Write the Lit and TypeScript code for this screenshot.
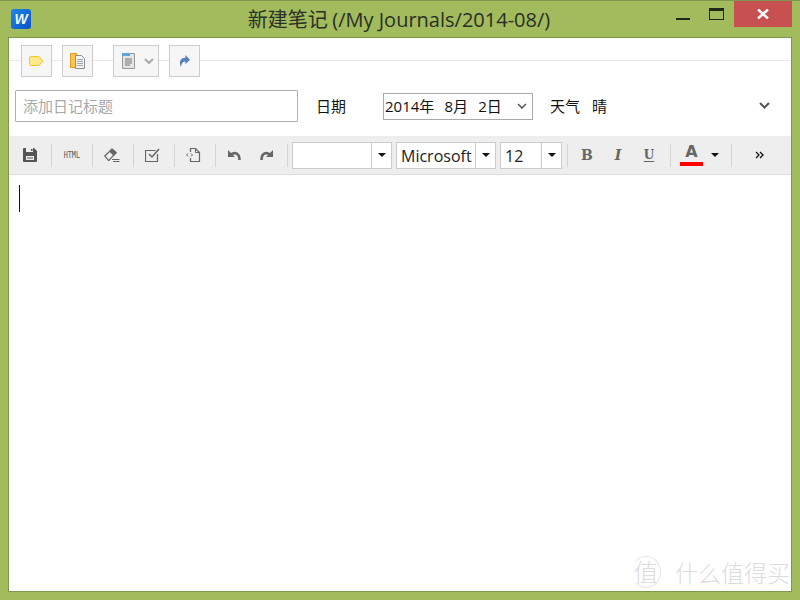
import { LitElement, html, css, svg } from "lit";
import { customElement } from "lit/decorators.js";

@customElement("app-root")
export class AppRoot extends LitElement {
  static styles = css`
    :host { display: block; width: 800px; height: 600px; overflow: hidden; font-family: "Open Sans","Noto Sans CJK SC",sans-serif; }
    svg { display: block; }
    .win { position: relative; width: 800px; height: 600px; box-sizing: border-box; background: #a1bb5d; border-top: 1px solid #7e9650; padding: 0 8px 8px; display: flex; flex-direction: column; }
    .title { height: 36px; flex: none; display: grid; grid-template-columns: 1fr auto 1fr; align-items: start; }
    .logo { margin: 8px 0 0 3px; width: 20px; height: 20px; border-radius: 3px; background: linear-gradient(135deg, #1f86e6, #0a52c8); color: #f2f6ff; font: italic bold 14px/20px "Liberation Sans", sans-serif; text-align: center; }
    .ttl { text-align: center; font-size: 20px; line-height: 26px; padding: 5px 2px 0 0; color: #2b2f25; font-family: "Noto Sans CJK SC", sans-serif; white-space: nowrap; }
    .ttl span { font-family: "Open Sans", sans-serif; }
    .wc { display: flex; align-items: flex-start; justify-content: flex-end; }
    .min { width: 14px; height: 2px; background: #22261b; margin: 17px 19px 0 0; }
    .max { width: 15px; height: 12px; box-sizing: border-box; border: 1px solid #22261b; border-top-width: 3px; margin: 7px 10px 0 0; }
    .close { width: 58px; height: 26px; background: #c75050; display: flex; align-items: center; justify-content: center; }
    .client { flex: 1; background: #fff; display: flex; flex-direction: column; min-height: 0; border: 1px solid #7e9650; }
    .tools { height: 31px; margin-top: 7px; padding-left: 12px; display: flex; gap: 10px; background: linear-gradient(#eaeaea, #eaeaea) 0 15px / 100% 1px no-repeat; }
    .tb { width: 31px; height: 32px; box-sizing: border-box; border: 1px solid #ccc; background: #f6f6f6; display: flex; align-items: center; justify-content: center; gap: 8px; }
    .tb.wide { width: 46px; margin: 0 0 0 10px; padding-left: 4px; }
    .meta { display: flex; align-items: center; height: 32px; margin-top: 14px; padding-left: 6px; font-size: 15px; color: #111; }
    .in { width: 283px; height: 32px; box-sizing: border-box; border: 1px solid #b0b0b0; border-radius: 1px; color: #a8a8a8; padding-left: 7px; line-height: 30px; flex: none; }
    .lb { margin-left: 18px; width: 67px; flex: none; padding-bottom: 2px; }
    .date { width: 150px; height: 27px; box-sizing: border-box; border: 1px solid #aaa; display: flex; align-items: center; justify-content: space-between; padding: 0 5px 0 1px; white-space: pre; word-spacing: 1.2px; flex: none; }
    .date span { padding-bottom: 2px; }
    .wl { margin-left: 17px; width: 42px; flex: none; padding-bottom: 2px; }
    .wv { flex: 1; padding-bottom: 2px; }
    .mchev { margin: 0 21px 2px 0; }
    .fmt { height: 38px; margin-top: 14px; flex: none; background: #eee; border-bottom: 1px solid #ddd; display: flex; align-items: center; }
    .ic { width: 40px; height: 38px; display: flex; align-items: center; justify-content: center; flex: none; box-sizing: border-box; }
    .ic.first { width: 42px; }
    .ic.left { padding-right: 3px; }
    .undo { width: 37px; }
    .redo { width: 26px; }
    .b1 { width: 38px; }
    .i1 { width: 24px; }
    .sep { width: 1px; height: 23px; background: #d4d4d4; flex: none; }
    .html { font: 400 9px/1 "DejaVu Sans Mono", monospace; color: #555; transform: scaleX(.75); }
    .combo { height: 27px; box-sizing: border-box; border: 1px solid #ccc; background: #fff; display: flex; flex: none; font-size: 16px; color: #222; line-height: 27px; }
    .combo .v { flex: 1; padding-left: 4px; overflow: hidden; white-space: nowrap; }
    .combo .b { width: 19px; border-left: 1px solid #ccc; display: flex; align-items: center; justify-content: center; flex: none; }
    .c100 { width: 100px; }
    .c62 { width: 62px; }
    .tri { width: 0; height: 0; border: 4px solid transparent; border-top: 4px solid #111; border-bottom: 0; flex: none; }
    .glyph { font: bold 14px/1 "DejaVu Serif", serif; color: #666; }
    .glyph.i { font-style: italic; }
    .glyph.u { font-size: 12px; text-decoration: underline; text-underline-offset: 2px; }
    .colorA { width: 23px; height: 26px; display: flex; flex-direction: column; align-items: center; font: bold 16px/19px "DejaVu Sans", sans-serif; color: #666; flex: none; }
    .colorA i { display: block; width: 23px; height: 4px; background: #f00; margin-top: 1px; }
    .s2 { width: 2px; flex: none; } .s4 { width: 4px; flex: none; } .s5 { width: 5px; flex: none; } .s8 { width: 8px; flex: none; } .s9 { width: 9px; flex: none; } .s12 { width: 12px; flex: none; } .s23 { width: 23px; flex: none; }
    .body { flex: 1; position: relative; padding: 10px 0 0 10px; }
    .caret { width: 1px; height: 27px; background: #111; }
    .wm { position: absolute; right: 1px; bottom: 3px; display: flex; align-items: center; gap: 14px; color: #dcdcdc; font: 300 23px/30px "Noto Sans CJK SC", sans-serif; white-space: nowrap; }
    .wm b { width: 30px; height: 32px; box-sizing: border-box; border: 1px solid #e6e6e6; border-left-color: transparent; border-radius: 50%; font-weight: 300; font-size: 25px; line-height: 29px; text-align: center; }
  `;

  private stroke(d: string, w = 1.5, c = "#666") {
    return svg`<path d=${d} fill="none" stroke=${c} stroke-width=${w}/>`;
  }

  render() {
    return html`<div class="win">
      <div class="title">
        <div class="logo">W</div>
        <div class="ttl">新建笔记 <span>(/My Journals/2014-08/)</span></div>
        <div class="wc">
          <div class="min"></div><div class="max"></div>
          <div class="close"><svg width="12" height="10" viewBox="0 0 12 10"><path d="M1 0.5 11 9.5M11 .5 1 9.5" stroke="#fff" stroke-width="2.4"/></svg></div>
        </div>
      </div>
      <div class="client">
        <div class="tools">
          <div class="tb"><svg width="15" height="10" viewBox="0 0 15 10"><path d="M1.5.5h8.5l4 4.5-4 4.5H1.5a1 1 0 0 1-1-1v-7a1 1 0 0 1 1-1z" fill="#ffe98a" stroke="#f4c430"/></svg></div>
          <div class="tb"><svg width="15" height="16" viewBox="0 0 15 16"><path d="M.5.5h6v14h-6z" fill="#fbc64a" stroke="#dc9a1e"/><path d="M5.500 2.500h6l3 3v10h-9z" fill="#f4f4f4" stroke="#8b8f94"/><path d="M7 6.500h6M7 8.500h6M7 10.500h6M7 12.500h6" stroke="#9aa7b0"/></svg></div>
          <div class="tb wide"><svg width="14" height="16" viewBox="0 0 14 16"><path d="M.5.5h12v15H.5z" fill="#e4e4e4" stroke="#999"/><path d="M0 0h8v3H0z" fill="#5ba6dd"/><path d="M3 6h7M3 8h7M3 10h7M3 12h5" stroke="#777"/></svg><svg width="10" height="6" viewBox="0 0 10 6"><path d="M1 1l4 4 4-4" fill="none" stroke="#aaa" stroke-width="2"/></svg></div>
          <div class="tb"><svg width="11" height="12" viewBox="0 0 12 13"><path d="M7 0l5 5-5 5V7C4 7 3 9 2 13 0 8 1 3 7 3z" fill="#5a82b8"/></svg></div>
        </div>
        <div class="meta">
          <div class="in">添加日记标题</div>
          <div class="lb">日期</div>
          <div class="date"><span>2014年  8月  2日</span><svg width="10" height="6" viewBox="0 0 10 6"><path d="M1 1l4 4 4-4" fill="none" stroke="#555" stroke-width="1.500"/></svg></div>
          <div class="wl">天气</div>
          <div class="wv">晴</div>
          <svg class="mchev" width="11" height="7" viewBox="0 0 11 7"><path d="M1 1l4.500 4.500L10 1" fill="none" stroke="#555" stroke-width="2"/></svg>
        </div>
        <div class="fmt">
          <div class="ic first"><svg width="14" height="14" viewBox="0 0 14 14"><path d="M0 1a1 1 0 0 1 1-1h10l3 3v10a1 1 0 0 1-1 1H1a1 1 0 0 1-1-1z" fill="#555"/><path d="M3 0h7v4H3zM3 8h8v4H3z" fill="#eee"/><path d="M8 1h1.500v2H8z" fill="#555"/><path d="M4 10h6" stroke="#555"/></svg></div>
          <div class="sep"></div>
          <div class="ic"><span class="html">HTML</span></div>
          <div class="sep"></div>
          <div class="ic left"><svg width="16" height="14" viewBox="0 0 16 14">${this.stroke("M.8 8 8 1l4 3.500-7 8H4.500z", 1.200)}<path d="M8 .5l5 4-3 3.500-5-4.500z" fill="#666"/>${this.stroke("M8 11.500h7.500M9 13.500h6.500", 1)}</svg></div>
          <div class="sep"></div>
          <div class="ic left"><svg width="15" height="14" viewBox="0 0 15 14">${this.stroke("M12.500 6v7.500H.5v-11h10", 1.200)}${this.stroke("M4 6l3 3 7-8", 1.500)}</svg></div>
          <div class="sep"></div>
          <div class="ic left"><svg width="15" height="14" viewBox="0 0 15 14">${this.stroke("M4.500 4V.5h5l4 4v9h-9V10", 1.200)}${this.stroke("M2 5.500 0.500 7 2 8.500M5 5.500 6.500 7 5 8.500", 1)}${this.stroke("M9.500.5v4h4", 1)}</svg></div>
          <div class="sep"></div>
          <div class="ic undo"><svg width="13" height="11" viewBox="0 0 13 11"><path d="M0 0v7h7z" fill="#666"/>${this.stroke("M3 4.500C7 1.500 11.500 3.500 11.500 10", 2.600)}</svg></div>
          <div class="ic redo"><svg width="13" height="11" viewBox="0 0 13 11"><path d="M13 0v7H6z" fill="#666"/>${this.stroke("M10 4.500C6 1.500 1.500 3.500 1.500 10", 2.600)}</svg></div>
          <div class="s8"></div>
          <div class="sep"></div>
          <div class="s4"></div>
          <div class="combo c100"><div class="v"></div><div class="b"><div class="tri"></div></div></div>
          <div class="s4"></div>
          <div class="combo c100"><div class="v">Microsoft</div><div class="b"><div class="tri"></div></div></div>
          <div class="s4"></div>
          <div class="combo c62"><div class="v">12</div><div class="b"><div class="tri"></div></div></div>
          <div class="s5"></div>
          <div class="sep"></div>
          <div class="ic b1"><span class="glyph">B</span></div>
          <div class="ic i1"><span class="glyph i">I</span></div>
          <div class="ic b1"><span class="glyph u">U</span></div>
          <div class="s2"></div>
          <div class="sep"></div>
          <div class="s9"></div>
          <div class="colorA">A<i></i></div>
          <div class="s8"></div>
          <div class="tri"></div>
          <div class="s12"></div>
          <div class="sep"></div>
          <div class="s23"></div>
          <svg width="9" height="8" viewBox="0 0 9 8"><path d="M1 1l3 3-3 3M5 1l3 3-3 3" fill="none" stroke="#111" stroke-width="1.300"/></svg>
        </div>
        <div class="body">
          <div class="caret"></div>
          <div class="wm"><b>值</b><span>什么值得买</span></div>
        </div>
      </div>
    </div>`;
  }
}
